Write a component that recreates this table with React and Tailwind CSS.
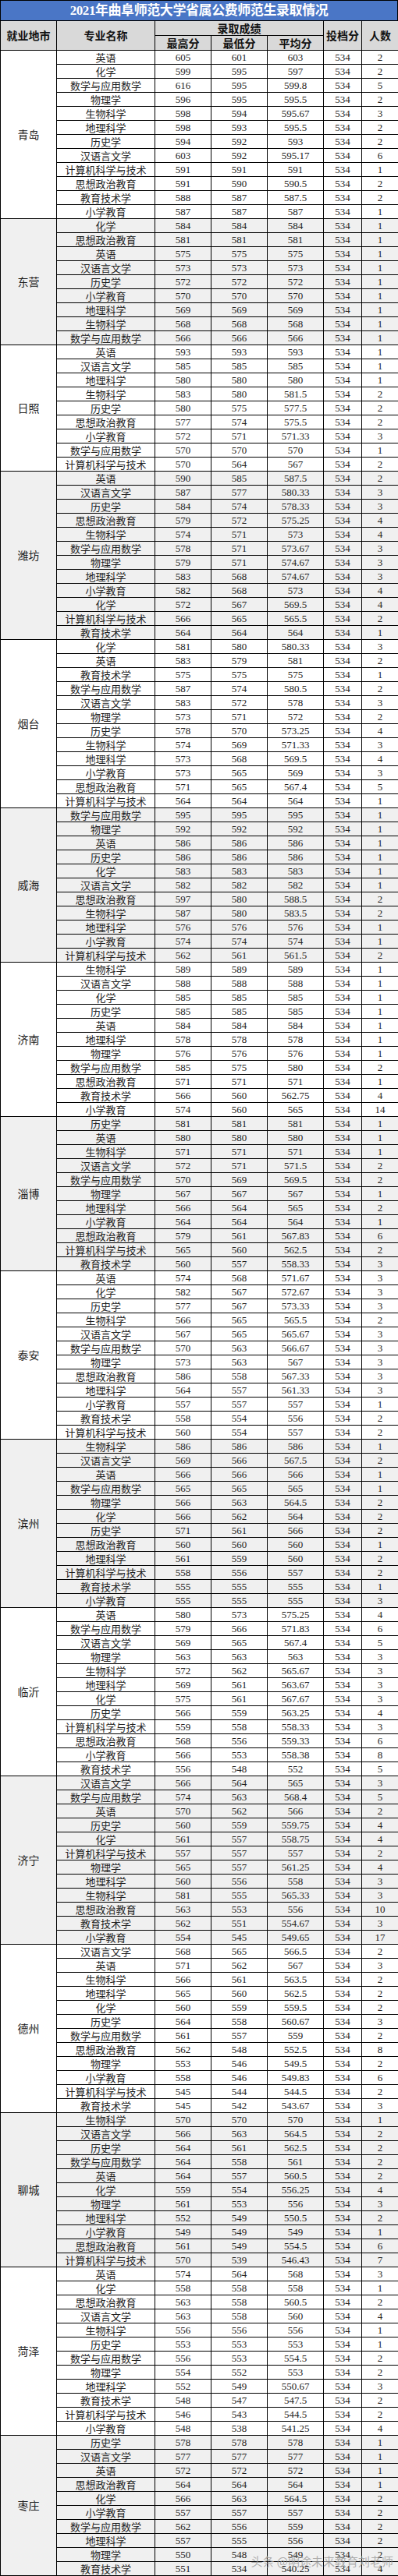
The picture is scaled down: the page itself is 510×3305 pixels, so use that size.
import React from "react";

const data = [
  ["青岛", false, [
    "英语 605 601 603 2", "化学 599 595 597 2", "数学与应用数学 616 595 599.8 5", "物理学 596 595 595.5 2",
    "生物科学 598 594 595.67 3", "地理科学 598 593 595.5 2", "历史学 594 592 593 2", "汉语言文学 603 592 595.17 6",
    "计算机科学与技术 591 591 591 1", "思想政治教育 591 590 590.5 2", "教育技术学 588 587 587.5 2", "小学教育 587 587 587 1",
  ]],
  ["东营", true, [
    "化学 584 584 584 1", "思想政治教育 581 581 581 1", "英语 575 575 575 1", "汉语言文学 573 573 573 1",
    "历史学 572 572 572 1", "小学教育 570 570 570 1", "地理科学 569 569 569 1", "生物科学 568 568 568 1",
    "数学与应用数学 566 566 566 1",
  ]],
  ["日照", false, [
    "英语 593 593 593 1", "汉语言文学 585 585 585 1", "地理科学 580 580 580 1", "生物科学 583 580 581.5 2",
    "历史学 580 575 577.5 2", "思想政治教育 577 574 575.5 2", "小学教育 572 571 571.33 3", "数学与应用数学 570 570 570 1",
    "计算机科学与技术 570 564 567 2",
  ]],
  ["潍坊", true, [
    "英语 590 585 587.5 2", "汉语言文学 587 577 580.33 3", "历史学 584 574 578.33 3", "思想政治教育 579 572 575.25 4",
    "生物科学 574 571 573 4", "数学与应用数学 578 571 573.67 3", "物理学 579 571 574.67 3", "地理科学 583 568 574.67 3",
    "小学教育 582 568 573 4", "化学 572 567 569.5 4", "计算机科学与技术 566 565 565.5 2", "教育技术学 564 564 564 1",
  ]],
  ["烟台", false, [
    "化学 581 580 580.33 3", "英语 583 579 581 2", "教育技术学 575 575 575 1", "数学与应用数学 587 574 580.5 2",
    "汉语言文学 583 572 578 3", "物理学 573 571 572 2", "历史学 578 570 573.25 4", "生物科学 574 569 571.33 3",
    "地理科学 573 568 569.5 4", "小学教育 573 565 569 3", "思想政治教育 571 565 567.4 5", "计算机科学与技术 564 564 564 1",
  ]],
  ["威海", true, [
    "数学与应用数学 595 595 595 1", "物理学 592 592 592 1", "英语 586 586 586 1", "历史学 586 586 586 1",
    "化学 583 583 583 1", "汉语言文学 582 582 582 1", "思想政治教育 597 580 588.5 2", "生物科学 587 580 583.5 2",
    "地理科学 576 576 576 1", "小学教育 574 574 574 1", "计算机科学与技术 562 561 561.5 2",
  ]],
  ["济南", false, [
    "生物科学 589 589 589 1", "汉语言文学 588 588 588 1", "化学 585 585 585 1", "历史学 585 585 585 1",
    "英语 584 584 584 1", "地理科学 578 578 578 1", "物理学 576 576 576 1", "数学与应用数学 585 575 580 2",
    "思想政治教育 571 571 571 1", "教育技术学 566 560 562.75 4", "小学教育 574 560 565 14",
  ]],
  ["淄博", true, [
    "历史学 581 581 581 1", "英语 580 580 580 1", "生物科学 571 571 571 1", "汉语言文学 572 571 571.5 2",
    "数学与应用数学 570 569 569.5 2", "物理学 567 567 567 1", "地理科学 566 564 565 2", "小学教育 564 564 564 1",
    "思想政治教育 579 561 567.83 6", "计算机科学与技术 565 560 562.5 2", "教育技术学 560 557 558.33 3",
  ]],
  ["泰安", false, [
    "英语 574 568 571.67 3", "化学 582 567 572.67 3", "历史学 577 567 573.33 3", "生物科学 566 565 565.5 2",
    "汉语言文学 567 565 565.67 3", "数学与应用数学 570 563 566.67 3", "物理学 573 563 567 3", "思想政治教育 586 558 567.33 3",
    "地理科学 564 557 561.33 3", "小学教育 557 557 557 1", "教育技术学 558 554 556 2", "计算机科学与技术 560 554 557 2",
  ]],
  ["滨州", true, [
    "生物科学 586 586 586 1", "汉语言文学 569 566 567.5 2", "英语 566 566 566 1", "数学与应用数学 565 565 565 1",
    "物理学 566 563 564.5 2", "化学 566 562 564 2", "历史学 571 561 566 2", "思想政治教育 560 560 560 1",
    "地理科学 561 559 560 2", "计算机科学与技术 558 556 557 2", "教育技术学 555 555 555 1", "小学教育 555 555 555 3",
  ]],
  ["临沂", false, [
    "英语 580 573 575.25 4", "数学与应用数学 579 566 571.83 6", "汉语言文学 569 565 567.4 5", "物理学 563 563 563 3",
    "生物科学 572 562 565.67 3", "地理科学 569 561 563.67 3", "化学 575 561 567.67 3", "历史学 566 559 563.25 4",
    "计算机科学与技术 559 558 558.33 3", "思想政治教育 568 556 559.33 6", "小学教育 566 553 558.38 8", "教育技术学 556 548 552 5",
  ]],
  ["济宁", true, [
    "汉语言文学 566 564 565 3", "数学与应用数学 574 563 568.4 5", "英语 570 562 566 2", "历史学 560 559 559.75 4",
    "化学 561 557 558.75 4", "计算机科学与技术 557 557 557 2", "物理学 565 557 561.25 4", "地理科学 560 556 558 3",
    "生物科学 581 555 565.33 3", "思想政治教育 563 553 556 10", "教育技术学 562 551 554.67 3", "小学教育 554 545 549.65 17",
  ]],
  ["德州", false, [
    "汉语言文学 568 565 566.5 2", "英语 571 562 567 3", "生物科学 566 561 563.5 2", "地理科学 565 560 562.5 2",
    "化学 560 559 559.5 2", "历史学 564 558 560.67 3", "数学与应用数学 561 557 559 2", "思想政治教育 562 548 552.5 8",
    "物理学 553 546 549.5 2", "小学教育 558 546 549.83 6", "计算机科学与技术 545 544 544.5 2", "教育技术学 545 542 543.67 3",
  ]],
  ["聊城", true, [
    "生物科学 570 570 570 1", "汉语言文学 566 563 564.5 2", "历史学 564 561 562.5 2", "数学与应用数学 564 558 561 2",
    "英语 564 557 560.5 2", "化学 559 554 556.25 4", "物理学 561 553 556 3", "地理科学 552 549 550.5 2",
    "小学教育 549 549 549 1", "思想政治教育 561 549 554.5 6", "计算机科学与技术 570 539 546.43 7",
  ]],
  ["菏泽", false, [
    "英语 574 564 568 3", "化学 558 558 558 1", "思想政治教育 563 558 560.5 2", "汉语言文学 563 558 560 4",
    "生物科学 556 556 556 1", "历史学 553 553 553 1", "数学与应用数学 556 553 554.5 2", "物理学 554 552 553 2",
    "地理科学 552 549 550.67 3", "教育技术学 548 547 547.5 2", "计算机科学与技术 546 543 544.5 2", "小学教育 548 538 541.25 4",
  ]],
  ["枣庄", true, [
    "历史学 578 578 578 1", "汉语言文学 577 577 577 1", "英语 572 572 572 1", "思想政治教育 564 564 564 1",
    "化学 566 563 564.5 2", "小学教育 557 557 557 2", "数学与应用数学 562 556 559 2", "地理科学 557 555 556 2",
    "物理学 550 548 549 2", "教育技术学 551 534 540.25 4",
  ]],
];

const cell = "border border-black p-0 text-center align-middle";

export default function App() {
  return (
    <div className="relative w-[510px] bg-white font-['Liberation_Serif','Noto_Sans_CJK_SC',serif] text-[13px] text-[#222]">
      <div className="h-[26px] bg-[#4a76c6] border border-black border-b-0 flex items-center justify-center text-white font-bold text-[17px] tracking-tight">
        2021年曲阜师范大学省属公费师范生录取情况
      </div>
      <table className="w-[510px] table-fixed border-collapse">
        <colgroup>
          <col className="w-[72px]" />
          <col className="w-[126px]" />
          <col className="w-[72px]" />
          <col className="w-[72px]" />
          <col className="w-[72px]" />
          <col className="w-[49px]" />
          <col className="w-[47px]" />
        </colgroup>
        <thead className="bg-[#d9d9d9] font-bold text-[14px] text-[#111] font-['Noto_Sans_CJK_SC',sans-serif]">
          <tr className="h-[19px]">
            <th rowSpan={2} className={cell}>就业地市</th>
            <th rowSpan={2} className={cell}>专业名称</th>
            <th colSpan={3} className={cell + " leading-[18px]"}>录取成绩</th>
            <th rowSpan={2} className={cell}>投档分</th>
            <th rowSpan={2} className={cell}>人数</th>
          </tr>
          <tr className="h-[19px]">
            <th className={cell + " leading-[18px]"}>最高分</th>
            <th className={cell + " leading-[18px]"}>最低分</th>
            <th className={cell + " leading-[18px]"}>平均分</th>
          </tr>
        </thead>
        <tbody>
          {data.map(([city, gray, rows]) =>
            rows.map((r, i) => {
              const [name, hi, lo, avg, n] = r.split(" ");
              return (
                <tr key={city + i} className={"h-[18px] leading-[17px] " + (gray ? "bg-[#f0f0f0]" : "bg-white")}>
                  {i === 0 && (
                    <td rowSpan={rows.length} className={cell + " text-[14px] font-['Noto_Sans_CJK_SC',sans-serif]"}>
                      {city}
                    </td>
                  )}
                  <td className={cell + " font-['Noto_Sans_CJK_SC',sans-serif] text-[13px]"}>{name}</td>
                  <td className={cell}>{hi}</td>
                  <td className={cell}>{lo}</td>
                  <td className={cell}>{avg}</td>
                  <td className={cell}>534</td>
                  <td className={cell}>{n}</td>
                </tr>
              );
            })
          )}
        </tbody>
      </table>
      <div className="absolute right-[6px] bottom-[8px] text-[15px] text-[#9a9a9a]/80 font-['Noto_Sans_CJK_SC',sans-serif]">
        头条 @明途未来教育刘老师
      </div>
    </div>
  );
}
